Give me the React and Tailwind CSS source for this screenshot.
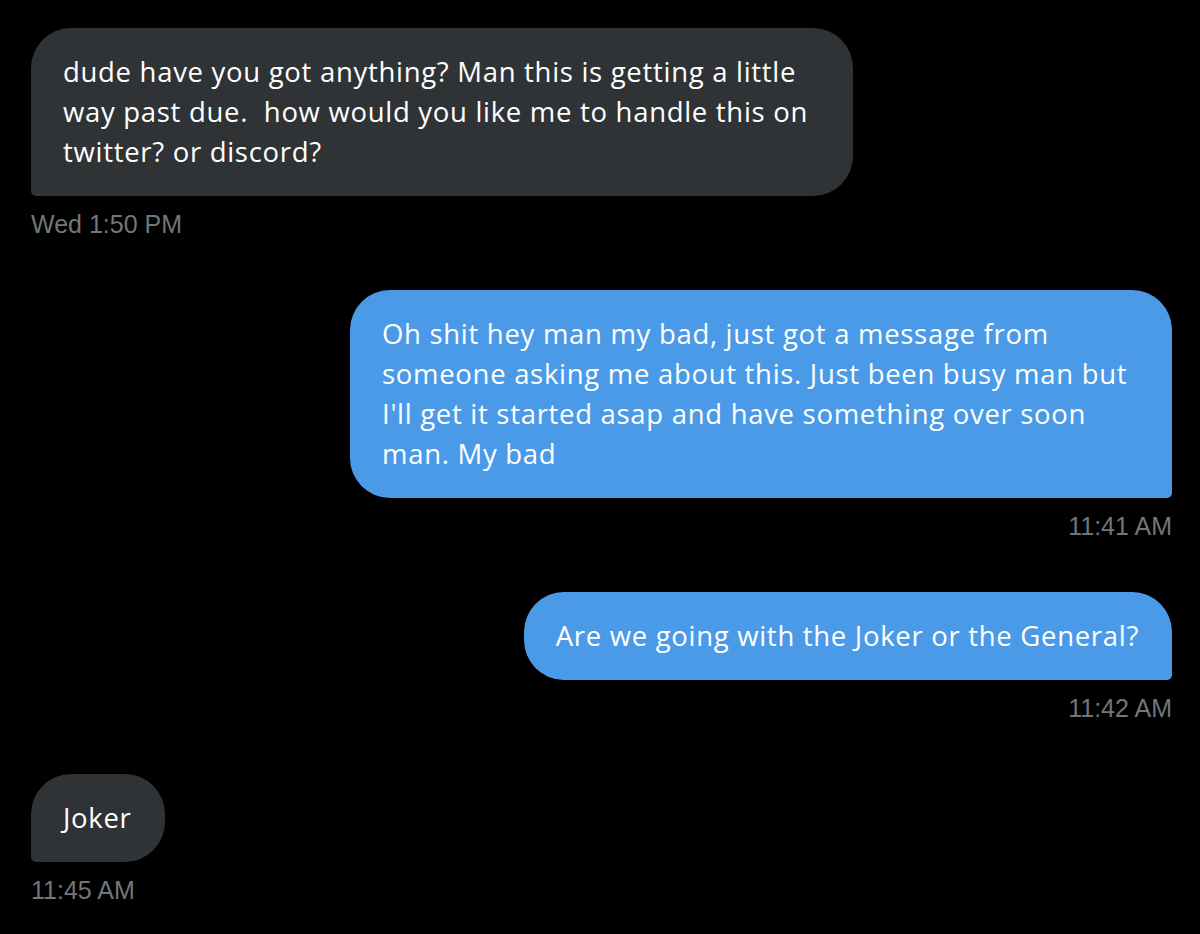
const messages = [
  {
    id: 1,
    mine: false,
    lines: ['dude have you got anything? Man this is getting a little', 'way past due.\u00a0 how would you like me to handle this on', 'twitter? or discord?'],
    time: 'Wed 1:50 PM',
    wide: true,
  },
  {
    id: 2,
    mine: true,
    lines: ['Oh shit hey man my bad, just got a message from', 'someone asking me about this. Just been busy man but', "I'll get it started asap and have something over soon", 'man. My bad'],
    time: '11:41 AM',
    wide: true,
  },
  {
    id: 3,
    mine: true,
    lines: ['Are we going with the Joker or the General?'],
    time: '11:42 AM',
  },
  {
    id: 4,
    mine: false,
    lines: ['Joker'],
    time: '11:45 AM',
  },
];

function Bubble({ msg }) {
  const shape = msg.mine
    ? 'bg-[#4b9ae8] rounded-[40px] rounded-br-[5px]'
    : 'bg-[#2f3336] rounded-[40px] rounded-bl-[5px]';
  return (
    <div className={`flex flex-col ${msg.mine ? 'items-end' : 'items-start'}`}>
      <div
        className={`${shape} ${msg.wide ? 'w-[822px]' : ''} pl-8 pr-[33px] pt-6 pb-6 text-white text-[27.5px] tracking-[0.7px] leading-[40px] font-['Open_Sans',sans-serif]`}
      >
        {msg.lines.map((l, i) => (
          <div key={i} className="whitespace-nowrap">{l}</div>
        ))}
      </div>
      <div className="mt-3 h-8 leading-8 text-[25px] text-[#71767b] font-['Liberation_Sans',Arial,sans-serif]">
        {msg.time}
      </div>
    </div>
  );
}

export default function App() {
  return (
    <div className="w-[1200px] h-[934px] bg-black pl-[31px] pr-7 pt-7 flex flex-col gap-[50px] overflow-hidden">
      {messages.map((m) => (
        <Bubble key={m.id} msg={m} />
      ))}
    </div>
  );
}
